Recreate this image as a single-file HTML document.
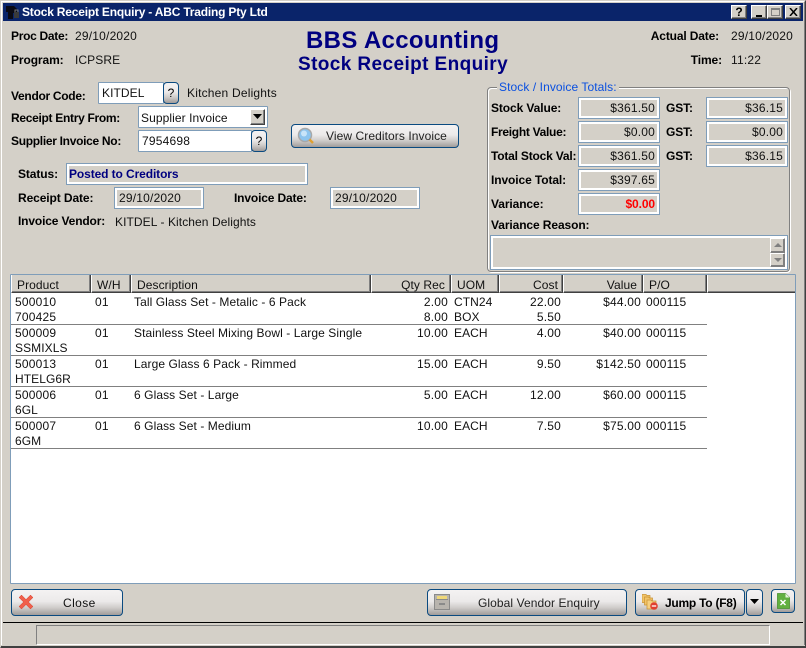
<!DOCTYPE html>
<html><head><meta charset="utf-8"><title>Stock Receipt Enquiry</title>
<style>
html,body{margin:0;padding:0;width:806px;height:648px;overflow:hidden;background:#d4d0c8}
body{position:relative;font:12px/14px "Liberation Sans",Arial,sans-serif;color:#000}
div,span,svg{position:absolute;box-sizing:border-box}
.t{white-space:nowrap;letter-spacing:.08px;color:#111}
.n{letter-spacing:.2px}
.b{font-weight:bold;letter-spacing:-.1px;color:#000}
.f{border:1px solid #7f9db9;background:#d4d0c8;box-shadow:inset 0 0 0 2px #fff}
.w{border:1px solid #7f9db9;background:#fff;border-radius:1px}
.btn{border:1px solid #0a4a80;border-radius:4px;background:linear-gradient(#f4f2f2 0%,#eceaea 45%,#d0cdcb 70%,#a09c9a 100%);text-align:center}
.bv{position:absolute;border:1px solid;border-color:#fff #404040 #404040 #fff;background:#d4d0c8;box-shadow:inset -1px -1px 0 #808080}
.h{position:absolute;top:275px;height:18px;background:#d4d0c8;border-right:1px solid #404040;border-left:1px solid #fff;border-bottom:1px solid #404040;box-shadow:inset -1px -1px 0 #808080}
.l{position:absolute;left:11px;width:696px;height:1px;background:#808080}
</style></head><body>
<!-- window frame -->
<div style="left:0;top:0;width:806px;height:648px;border:1px solid #404040;border-top-color:#d4d0c8;border-left-color:#d4d0c8"></div>
<div style="left:1px;top:1px;width:804px;height:646px;border:1px solid #808080;border-top-color:#fff;border-left-color:#fff"></div>
<!-- title -->
<div style="left:3px;top:3px;width:800px;height:18px;background:#0a246a"></div>
<svg style="left:5px;top:4px" width="16" height="16" viewBox="0 0 16 16"><path d="M1 2h8l3 3v4H8v6H3V8H1z" fill="#0a0a14"/><path d="M9 8h5v6H9z" fill="#3a3a3a"/><path d="M10 8V6h3v2" fill="none" stroke="#777"/></svg>
<span class="t b" style="left:22px;top:5px;color:#fff;font-size:12px;letter-spacing:-.2px">Stock Receipt Enquiry - ABC Trading Pty Ltd</span>
<div class="bv" style="left:731px;top:5px;width:16px;height:14px;font:bold 12px/12px 'Liberation Sans';text-align:center">?</div>
<div class="bv" style="left:751px;top:5px;width:16px;height:14px"><div style="left:4px;top:9px;width:6px;height:2px;background:#000"></div></div>
<div class="bv" style="left:767px;top:5px;width:16px;height:14px"><div style="left:3px;top:2px;width:9px;height:8px;border:1px solid #808080;border-top-width:2px"></div></div>
<div class="bv" style="left:785px;top:5px;width:16px;height:14px"><svg style="left:3px;top:2px" width="9" height="8" viewBox="0 0 9 8"><path d="M1 0l7 8M8 0L1 8" stroke="#000" stroke-width="1.5"/></svg></div>

<!-- top labels -->
<span class="t b" style="left:11px;top:29px;letter-spacing:-.3px">Proc Date:</span><span class="t n" style="left:75px;top:29px">29/10/2020</span>
<span class="t b" style="left:11px;top:53px">Program:</span><span class="t" style="left:75px;top:53px">ICPSRE</span>
<span class="b" style="left:306px;top:27px;font-size:24px;line-height:28px;color:#000080;white-space:nowrap;letter-spacing:.35px">BBS Accounting</span>
<span class="b" style="left:298px;top:53px;font-size:19px;line-height:24px;color:#000080;white-space:nowrap;letter-spacing:.4px">Stock Receipt Enquiry</span>
<span class="t b" style="right:87px;top:29px;letter-spacing:-.15px">Actual Date:</span><span class="t n" style="left:731px;top:29px">29/10/2020</span>
<span class="t b" style="right:84px;top:53px">Time:</span><span class="t n" style="left:731px;top:53px">11:22</span>

<!-- vendor -->
<span class="t b" style="left:11px;top:89px;letter-spacing:-.3px">Vendor Code:</span>
<div class="w" style="left:98px;top:82px;width:66px;height:22px"></div><span class="t" style="left:102px;top:86px">KITDEL</span>
<div class="btn" style="left:163px;top:82px;width:16px;height:22px;font-size:12px;line-height:20px">?</div>
<span class="t" style="left:187px;top:86px;letter-spacing:.2px">Kitchen Delights</span>
<span class="t b" style="left:11px;top:111px;letter-spacing:-.3px">Receipt Entry From:</span>
<div class="w" style="left:138px;top:106px;width:130px;height:22px"></div><span class="t" style="left:141px;top:111px">Supplier Invoice</span>
<div class="bv" style="left:250px;top:109px;width:15px;height:16px"><svg style="left:2px;top:4px" width="9" height="6"><path d="M0 0h9L4.500 5z" fill="#000"/></svg></div>
<span class="t b" style="left:11px;top:134px;letter-spacing:-.3px">Supplier Invoice No:</span>
<div class="w" style="left:138px;top:130px;width:114px;height:22px"></div><span class="t n" style="left:142px;top:134px">7954698</span>
<div class="btn" style="left:251px;top:130px;width:16px;height:22px;line-height:20px">?</div>

<!-- view creditors -->
<div class="btn" style="left:291px;top:124px;width:168px;height:24px"></div>
<svg style="left:297px;top:127px" width="18" height="18" viewBox="0 0 18 18"><circle cx="8" cy="8" r="6.500" fill="#8cc4ee" stroke="#a8a8a8" stroke-width="1.500"/><circle cx="7" cy="6.500" r="3" fill="#c8e4f8"/><path d="M12.500 12.500l3.500 3.500" stroke="#e0a030" stroke-width="2.500"/></svg>
<span class="t" style="left:326px;top:129px;color:#222">View Creditors Invoice</span>

<!-- status -->
<span class="t b" style="left:18px;top:167px">Status:</span>
<div class="f" style="left:66px;top:163px;width:242px;height:22px"></div>
<span class="t b" style="left:69px;top:167px;color:#000080">Posted to Creditors</span>
<span class="t b" style="left:18px;top:191px">Receipt Date:</span>
<div class="f" style="left:114px;top:187px;width:90px;height:22px"></div><span class="t n" style="left:119px;top:191px">29/10/2020</span>
<span class="t b" style="left:234px;top:191px;letter-spacing:-.15px">Invoice Date:</span>
<div class="f" style="left:330px;top:187px;width:90px;height:22px"></div><span class="t n" style="left:335px;top:191px">29/10/2020</span>
<span class="t b" style="left:18px;top:214px;letter-spacing:-.15px">Invoice Vendor:</span>
<span class="t" style="left:115px;top:215px">KITDEL - Kitchen Delights</span>

<!-- group box -->
<div style="left:487px;top:87px;width:303px;height:185px;border:1px solid #808080;border-radius:4px;box-shadow:1px 1px 0 #fff,inset 1px 1px 0 #fff"></div>
<span class="t" style="left:497px;top:80px;padding:0 2px;background:#d4d0c8;color:#0a50e0">Stock / Invoice Totals:</span>
<span class="t b" style="left:491px;top:101px">Stock Value:</span>
<div class="f" style="left:578px;top:97px;width:82px;height:22px"></div><span class="t n" style="right:151px;top:101px">$361.50</span>
<span class="t b" style="left:666px;top:101px">GST:</span>
<div class="f" style="left:706px;top:97px;width:82px;height:22px"></div><span class="t n" style="right:23px;top:101px">$36.15</span>
<span class="t b" style="left:491px;top:125px;letter-spacing:-.3px">Freight Value:</span>
<div class="f" style="left:578px;top:121px;width:82px;height:22px"></div><span class="t n" style="right:151px;top:125px">$0.00</span>
<span class="t b" style="left:666px;top:125px">GST:</span>
<div class="f" style="left:706px;top:121px;width:82px;height:22px"></div><span class="t n" style="right:23px;top:125px">$0.00</span>
<span class="t b" style="left:491px;top:149px;letter-spacing:-.2px">Total Stock Val:</span>
<div class="f" style="left:578px;top:145px;width:82px;height:22px"></div><span class="t n" style="right:151px;top:149px">$361.50</span>
<span class="t b" style="left:666px;top:149px">GST:</span>
<div class="f" style="left:706px;top:145px;width:82px;height:22px"></div><span class="t n" style="right:23px;top:149px">$36.15</span>
<span class="t b" style="left:491px;top:173px">Invoice Total:</span>
<div class="f" style="left:578px;top:169px;width:82px;height:22px"></div><span class="t n" style="right:151px;top:173px">$397.65</span>
<span class="t b" style="left:491px;top:197px">Variance:</span>
<div class="f" style="left:578px;top:193px;width:82px;height:22px"></div><span class="t b" style="right:151px;top:197px;color:#f00">$0.00</span>
<span class="t b" style="left:491px;top:218px">Variance Reason:</span>
<div class="f" style="left:490px;top:235px;width:298px;height:35px"></div>
<div class="bv" style="left:770px;top:238px;width:15px;height:15px;border-color:#fff #808080 #808080 #fff"><svg style="left:3px;top:4px" width="8" height="5"><path d="M4 0l4 4H0z" fill="#808080"/></svg></div>
<div class="bv" style="left:770px;top:253px;width:15px;height:14px;border-color:#fff #808080 #808080 #fff"><svg style="left:3px;top:4px" width="8" height="5"><path d="M0 0h8L4 4z" fill="#808080"/></svg></div>

<!-- grid -->
<div class="w" style="left:10px;top:274px;width:786px;height:310px"></div>
<div class="h" style="left:11px;width:80px"></div>
<div class="h" style="left:91px;width:40px"></div>
<div class="h" style="left:131px;width:240px"></div>
<div class="h" style="left:371px;width:80px"></div>
<div class="h" style="left:451px;width:48px"></div>
<div class="h" style="left:499px;width:64px"></div>
<div class="h" style="left:563px;width:80px"></div>
<div class="h" style="left:643px;width:64px"></div>
<div class="h" style="left:707px;width:88px;border-right:0;box-shadow:inset 0 -1px 0 #808080"></div>
<span class="t" style="left:17px;top:278px">Product</span>
<span class="t" style="left:97px;top:278px">W/H</span>
<span class="t" style="left:137px;top:278px">Description</span>
<span class="t" style="right:361px;top:278px">Qty Rec</span>
<span class="t" style="left:457px;top:278px">UOM</span>
<span class="t" style="right:248px;top:278px">Cost</span>
<span class="t" style="right:169px;top:278px">Value</span>
<span class="t" style="left:649px;top:278px">P/O</span>

<div class="l" style="top:324px"></div><div class="l" style="top:355px"></div><div class="l" style="top:386px"></div><div class="l" style="top:417px"></div><div class="l" style="top:448px"></div>

<span class="t n" style="left:15px;top:295px">500010</span><span class="t n" style="left:15px;top:310px">700425</span><span class="t n" style="left:95px;top:295px">01</span><span class="t" style="left:134px;top:295px">Tall Glass Set - Metalic - 6 Pack</span><span class="t n" style="right:358px;top:295px">2.00</span><span class="t n" style="right:358px;top:310px">8.00</span><span class="t" style="left:454px;top:295px">CTN24</span><span class="t" style="left:454px;top:310px">BOX</span><span class="t n" style="right:245px;top:295px">22.00</span><span class="t n" style="right:245px;top:310px">5.50</span><span class="t n" style="right:165px;top:295px">$44.00</span><span class="t n" style="left:646px;top:295px">000115</span>

<span class="t n" style="left:15px;top:326px">500009</span><span class="t" style="left:15px;top:341px">SSMIXLS</span><span class="t n" style="left:95px;top:326px">01</span><span class="t" style="left:134px;top:326px">Stainless Steel Mixing Bowl - Large Single</span><span class="t n" style="right:358px;top:326px">10.00</span><span class="t" style="left:454px;top:326px">EACH</span><span class="t n" style="right:245px;top:326px">4.00</span><span class="t n" style="right:165px;top:326px">$40.00</span><span class="t n" style="left:646px;top:326px">000115</span>

<span class="t n" style="left:15px;top:357px">500013</span><span class="t" style="left:15px;top:372px">HTELG6R</span><span class="t n" style="left:95px;top:357px">01</span><span class="t" style="left:134px;top:357px">Large Glass 6 Pack - Rimmed</span><span class="t n" style="right:358px;top:357px">15.00</span><span class="t" style="left:454px;top:357px">EACH</span><span class="t n" style="right:245px;top:357px">9.50</span><span class="t n" style="right:165px;top:357px">$142.50</span><span class="t n" style="left:646px;top:357px">000115</span>

<span class="t n" style="left:15px;top:388px">500006</span><span class="t" style="left:15px;top:403px">6GL</span><span class="t n" style="left:95px;top:388px">01</span><span class="t" style="left:134px;top:388px">6 Glass Set - Large</span><span class="t n" style="right:358px;top:388px">5.00</span><span class="t" style="left:454px;top:388px">EACH</span><span class="t n" style="right:245px;top:388px">12.00</span><span class="t n" style="right:165px;top:388px">$60.00</span><span class="t n" style="left:646px;top:388px">000115</span>

<span class="t n" style="left:15px;top:419px">500007</span><span class="t" style="left:15px;top:434px">6GM</span><span class="t n" style="left:95px;top:419px">01</span><span class="t" style="left:134px;top:419px">6 Glass Set - Medium</span><span class="t n" style="right:358px;top:419px">10.00</span><span class="t" style="left:454px;top:419px">EACH</span><span class="t n" style="right:245px;top:419px">7.50</span><span class="t n" style="right:165px;top:419px">$75.00</span><span class="t n" style="left:646px;top:419px">000115</span>

<!-- bottom buttons -->
<div class="btn" style="left:11px;top:589px;width:112px;height:27px"></div>
<svg style="left:18px;top:594px" width="16" height="16" viewBox="0 0 16 16"><path d="M3.500 1L8 5.500 12.500 1 15 3.500 10.500 8 15 12.500 12.500 15 8 10.500 3.500 15 1 12.500 5.500 8 1 3.500z" fill="#f0604c" stroke="#d04838" stroke-width=".5"/></svg>
<span class="t" style="left:63px;top:596px;letter-spacing:.4px">Close</span>

<div class="btn" style="left:427px;top:589px;width:200px;height:27px"></div>
<svg style="left:434px;top:594px" width="16" height="16" viewBox="0 0 16 16"><rect x=".5" y=".5" width="15" height="15" fill="#b8b4ae" stroke="#8a8a8a"/><rect x="3" y="2" width="10" height="3" fill="#f0d878"/><rect x="2" y="5" width="12" height="1" fill="#8a8a8a"/><rect x="5" y="9" width="6" height="2" fill="#8a8a8a"/></svg>
<span class="t" style="left:478px;top:596px;color:#222">Global Vendor Enquiry</span>

<div class="btn" style="left:635px;top:589px;width:110px;height:27px"></div>
<svg style="left:642px;top:594px" width="16" height="16" viewBox="0 0 16 16"><path d="M0 .5h4l1 1h3v7H0z" fill="#f2c468" stroke="#c89030" stroke-width=".7"/><path d="M2.500 3h4l1 1h3v7h-8z" fill="#f2c468" stroke="#c89030" stroke-width=".7"/><path d="M5 6h4l1 1h4v8H5z" fill="#f6d080" stroke="#c89030" stroke-width=".7"/><circle cx="12" cy="12" r="3.800" fill="#e04030"/><path d="M9.800 12h4.400" stroke="#fff" stroke-width="1.300"/></svg>
<span class="t b" style="left:665px;top:596px;letter-spacing:-.25px">Jump To (F8)</span>
<div class="btn" style="left:746px;top:589px;width:17px;height:27px"><svg style="left:3px;top:9px" width="9" height="6"><path d="M0 0h9L4.500 5z" fill="#000"/></svg></div>
<div class="btn" style="left:771px;top:589px;width:24px;height:24px"><svg style="left:5px;top:3px" width="13" height="16" viewBox="0 0 13 16"><path d="M.5.500h8l4 4v11H.5z" fill="#62b040" stroke="#4a9030" stroke-width=".8"/><path d="M8.500.500v4h4z" fill="#e4f4d8"/><path d="M3.500 7l5 5M8.500 7l-5 5" stroke="#fff" stroke-width="1.500"/></svg></div>

<!-- status bar -->
<div style="left:3px;top:622px;width:800px;height:1px;background:#000"></div>
<div style="left:36px;top:625px;width:734px;height:20px;border:1px solid;border-color:#808080 #fff #fff #808080"></div>
<div style="left:1px;top:645px;width:804px;height:3px;background:#d4d0c8;border-bottom:2px solid #404040"></div>
</body></html>
